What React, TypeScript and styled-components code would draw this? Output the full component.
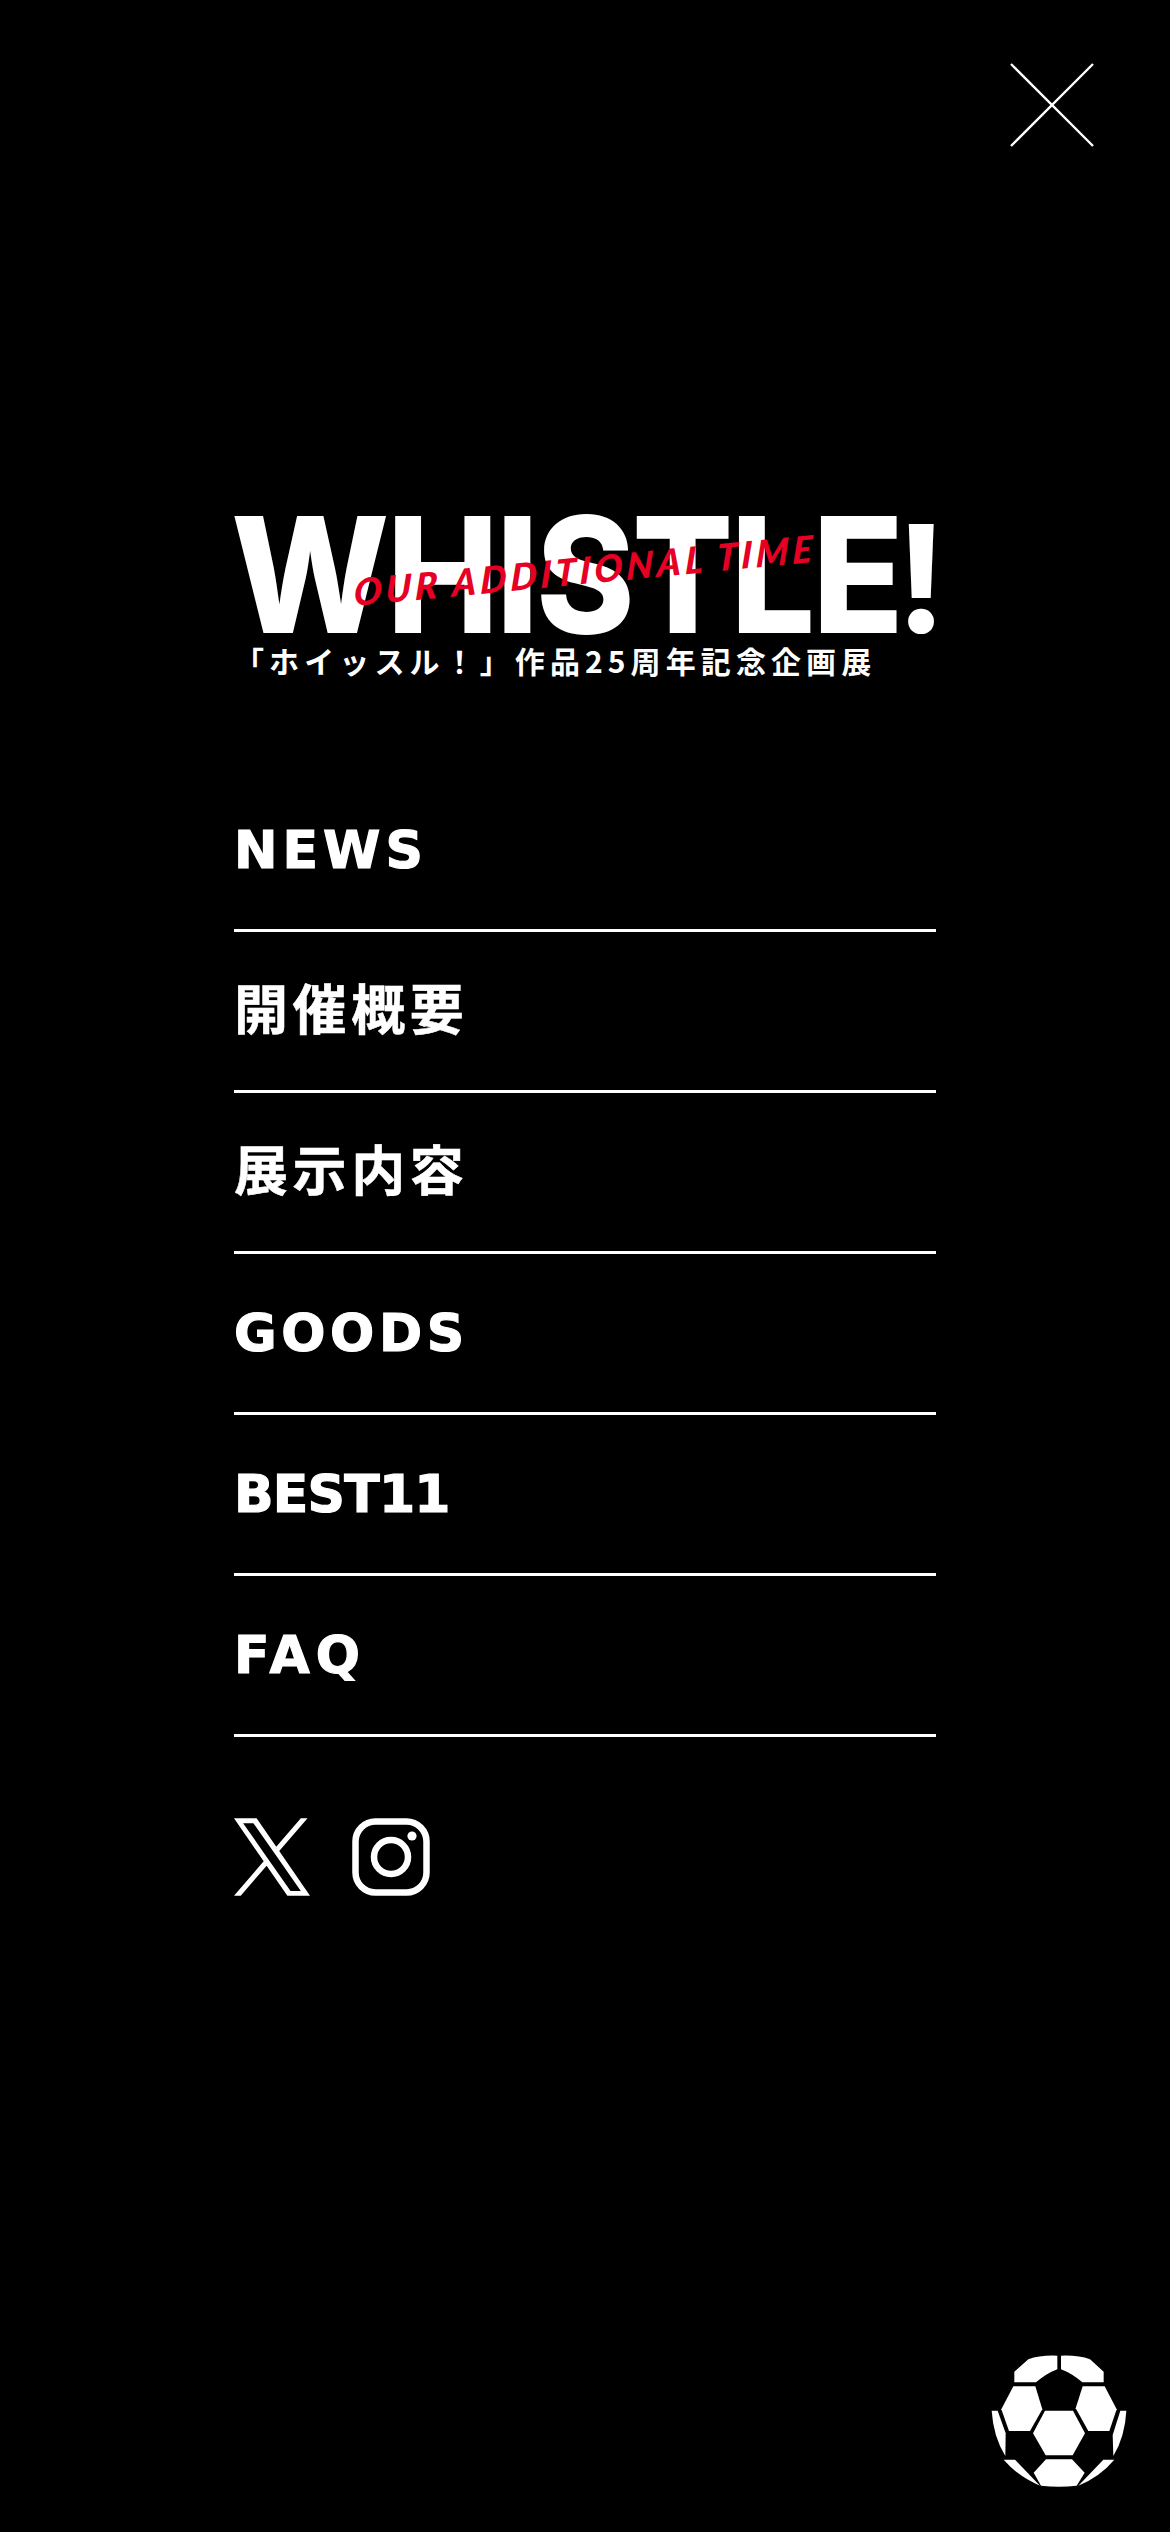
import React from "react";
import styled, { createGlobalStyle } from "styled-components";

const GlobalStyle = createGlobalStyle`
  html, body {
    margin: 0;
    padding: 0;
    background: #000;
  }
`;

const Page = styled.div`
  position: relative;
  width: 1170px;
  height: 2532px;
  overflow: hidden;
  background: #000;
  color: #fff;
  padding-top: 63px;
  box-sizing: border-box;
`;

const CloseRow = styled.div`
  display: flex;
  justify-content: flex-end;
  padding-right: 76px;
`;

const CloseButton = styled.button`
  display: block;
  width: 84px;
  height: 84px;
  padding: 0;
  border: 0;
  background: none;
  cursor: pointer;
`;

const Column = styled.div`
  width: 702px;
  margin: 369px auto 0;
`;

const Logo = styled.div`
  position: relative;
  height: 255px;
`;

const LogoWord = styled.div`
  height: 117px;
  margin-left: -3px;
  font-family: Inter, "Liberation Sans", sans-serif;
  font-weight: 800;
  font-size: 161px;
  line-height: 117px;
  white-space: nowrap;
  transform-origin: left center;
  transform: scaleX(0.93);
  letter-spacing: -3px;
`;

const LogoBang = styled.span`
  font-family: Roboto, "Liberation Sans", sans-serif;
  font-weight: 900;
  font-size: 152px;
`;

const Slogan = styled.div`
  position: absolute;
  left: 120px;
  top: 56px;
  font-family: Lato, "Liberation Sans", sans-serif;
  font-weight: 900;
  font-style: italic;
  font-size: 37px;
  line-height: 40px;
  letter-spacing: 4px;
  color: #e60023;
  white-space: nowrap;
  transform-origin: left center;
  transform: rotate(-5.5deg) skewX(-8deg);
`;

const Subtitle = styled.div`
  margin-top: 5px;
  font-family: "Noto Sans CJK JP", sans-serif;
  font-weight: 700;
  font-size: 30px;
  line-height: 44px;
  letter-spacing: 5.1px;
  white-space: nowrap;
`;

const Nav = styled.nav`
  display: flex;
  flex-direction: column;
`;

const NavItem = styled.a<{ $cjk?: boolean; $spacing: number }>`
  display: flex;
  align-items: center;
  height: 161px;
  box-sizing: border-box;
  border-bottom: 3px solid #fff;
  padding-bottom: ${(p) => (p.$cjk ? "10px" : "0")};
  font-family: "DejaVu Sans", "Noto Sans CJK JP", sans-serif;
  font-weight: 700;
  font-size: ${(p) => (p.$cjk ? "54px" : "52px")};
  letter-spacing: ${(p) => p.$spacing}px;
  -webkit-text-stroke: ${(p) => (p.$cjk ? "0.5px" : "1.2px")} #fff;
  color: #fff;
  text-decoration: none;
`;

const Socials = styled.div`
  display: flex;
  align-items: center;
  gap: 42px;
  margin-top: 81px;
`;

const BallButton = styled.div`
  position: absolute;
  left: 960px;
  top: 2320px;
  width: 190px;
  height: 190px;
`;

const navItems = [
  { label: "NEWS", spacing: 5 },
  { label: "開催概要", cjk: true, spacing: 4.6 },
  { label: "展示内容", cjk: true, spacing: 4.6 },
  { label: "GOODS", spacing: 4.6 },
  { label: "BEST11", spacing: -0.8 },
  { label: "FAQ", spacing: 6 },
];

const App: React.FC = () => {
  return (
    <Page>
      <GlobalStyle />
      <CloseRow>
        <CloseButton aria-label="close">
          <svg width="84" height="84" viewBox="0 0 84 84" fill="none" stroke="#fff" strokeWidth="2.4">
            <path d="M1 1L83 83M83 1L1 83" />
          </svg>
        </CloseButton>
      </CloseRow>
      <Column>
        <Logo>
          <LogoWord>
            WHISTLE<LogoBang>!</LogoBang>
          </LogoWord>
          <Slogan>OUR ADDITIONAL TIME</Slogan>
          <Subtitle>「ホイッスル！」作品25周年記念企画展</Subtitle>
        </Logo>
        <Nav>
          {navItems.map((item) => (
            <NavItem key={item.label} href="#" $cjk={item.cjk} $spacing={item.spacing}>
              {item.label}
            </NavItem>
          ))}
        </Nav>
        <Socials>
          <svg width="76" height="78" viewBox="0 0 1200 1227" fill="#fff">
            <path d="M714.163 519.284L1160.89 0H1055.03L667.137 450.887L357.328 0H0L468.492 681.821L0 1226.37H105.866L515.491 750.218L842.672 1226.37H1200L714.137 519.284H714.163ZM569.165 687.828L521.697 619.934L144.011 79.6944H306.615L611.412 515.685L658.88 583.579L1055.08 1150.3H892.476L569.165 687.854V687.828Z" />
          </svg>
          <svg width="78" height="78" viewBox="0 0 78 78" fill="none" stroke="#fff" strokeWidth="6.5">
            <rect x="3.5" y="3.5" width="71" height="71" rx="20" />
            <circle cx="39" cy="39" r="17" />
            <circle cx="60" cy="18" r="4.6" fill="#fff" stroke="none" />
          </svg>
        </Socials>
      </Column>
      <BallButton>
        <svg width="190" height="190" viewBox="0 0 570 570" fill="#fff">
          <path d="M163 155L205 118Q240 105 292 107L292 148Q260 160 228 187L163 187Z" />
          <path d="M431 155L390 118Q355 105 303 107L303 148Q335 160 367 187L431 187Z" />
          <path d="M160 199L226 199L247 268L210 333L147 333L124 268Z" />
          <path d="M368 199L434 199L470 268L448 333L385 333L347 265Z" />
          <path d="M255 272L339 272L375 340L338 406L257 406L219 340Z" />
          <path d="M95 272L113 272L137 340L136 408Q100 350 95 272Z" />
          <path d="M499 272L481 272L458 345L460 408Q495 350 499 272Z" />
          <path d="M258 418L336 418L374 458L350 497Q297 503 243 497L221 458Z" />
          <path d="M131 419L165 419L240 497Q175 470 131 419Z" />
          <path d="M463 419L430 419L355 497Q420 470 463 419Z" />
        </svg>
      </BallButton>
    </Page>
  );
};

export default App;
